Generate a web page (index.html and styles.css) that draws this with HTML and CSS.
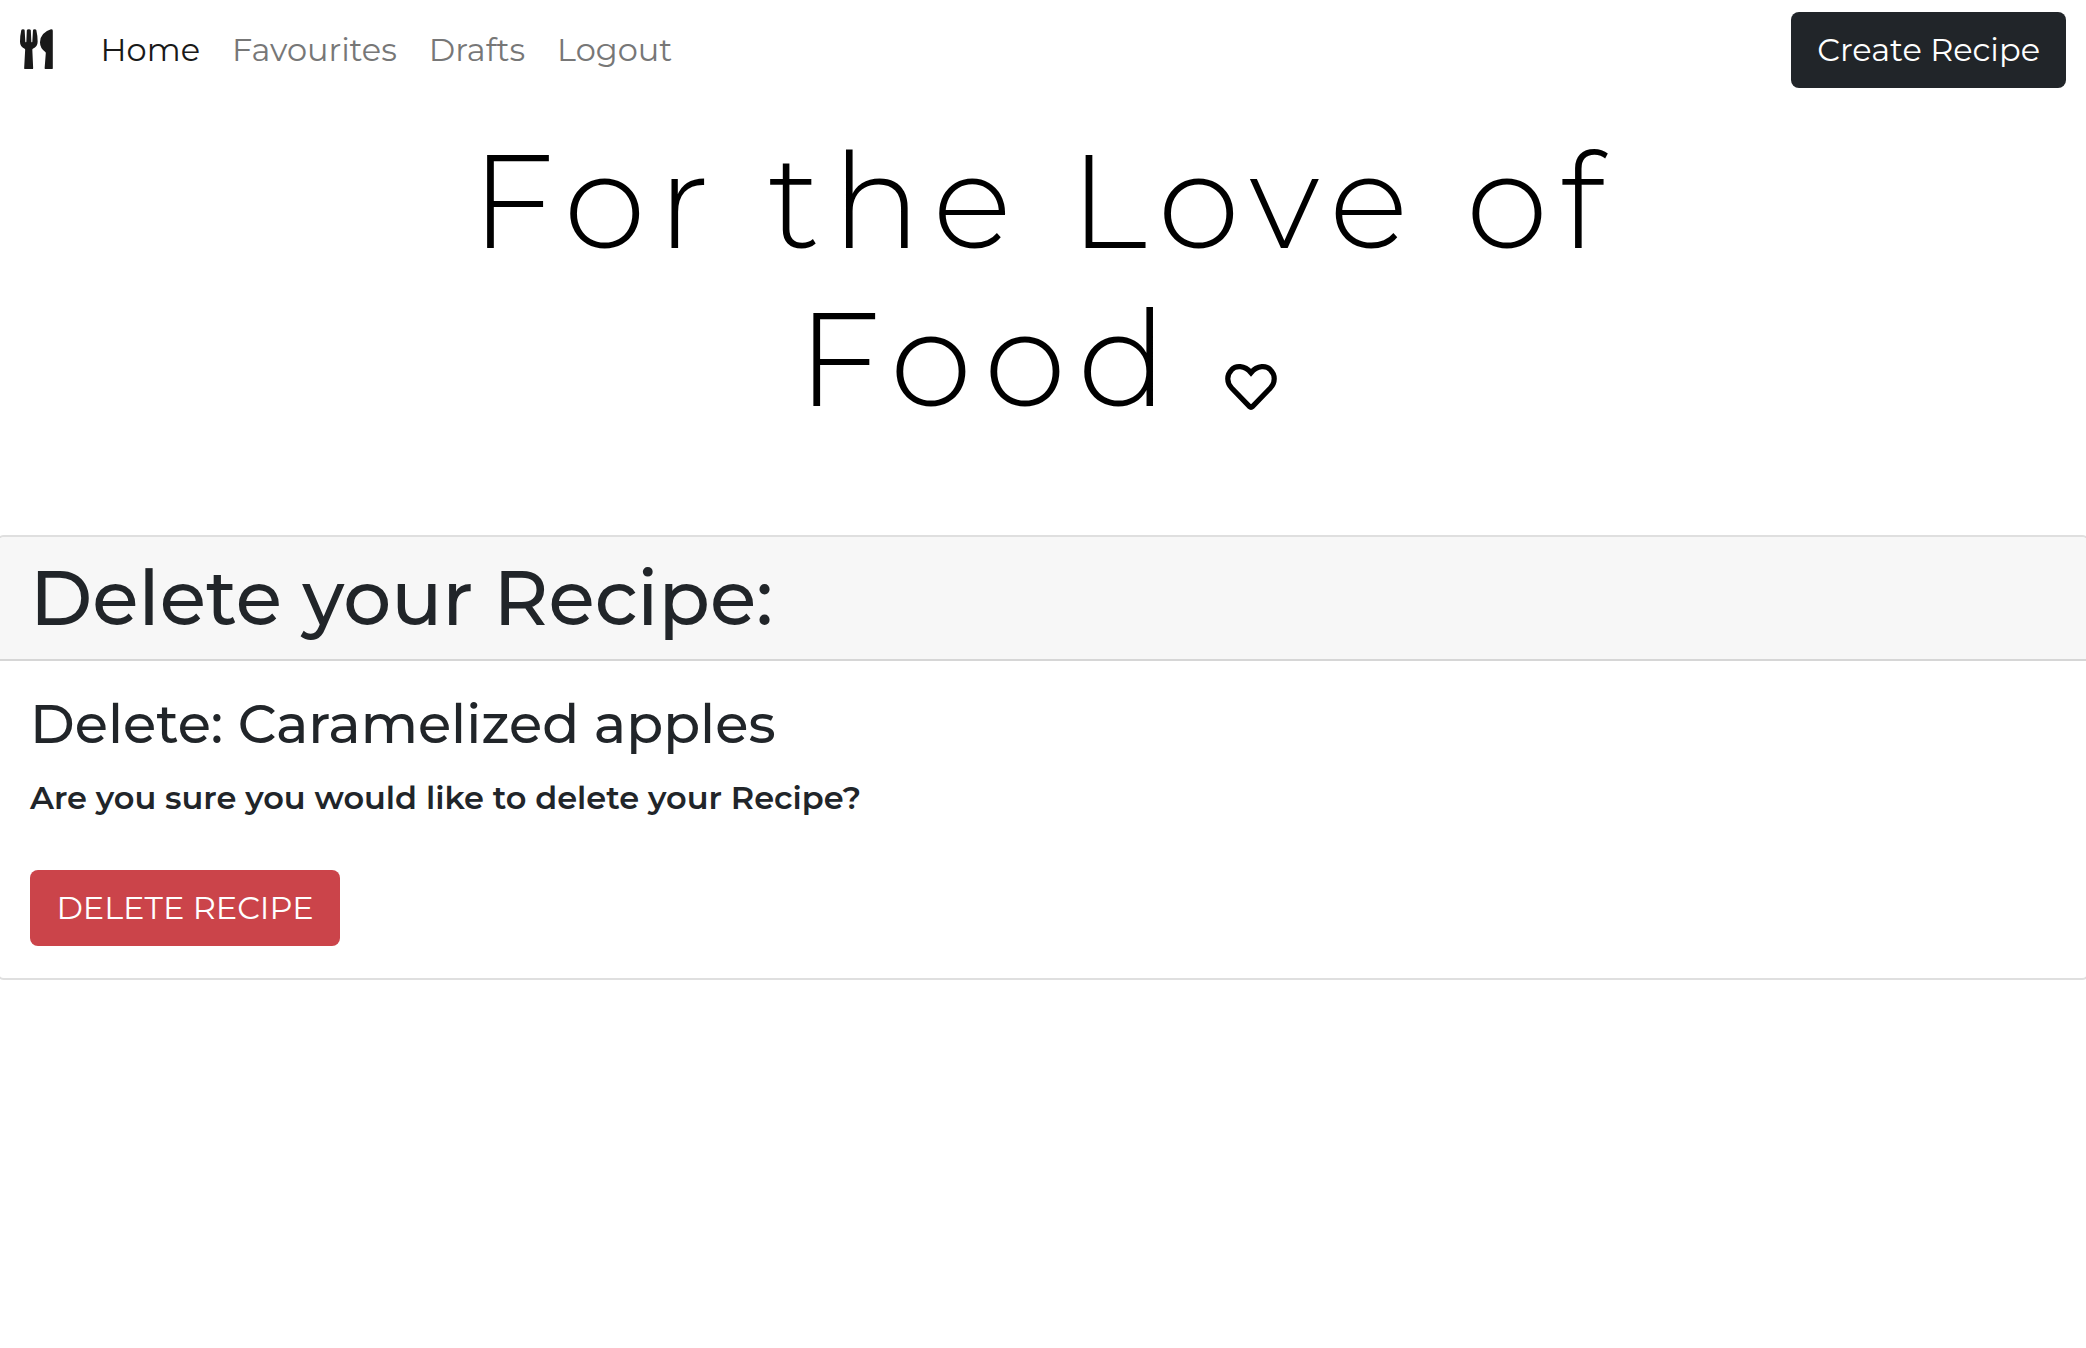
FILE: index.html
```html
<!DOCTYPE html>
<html lang="en">
<head>
<meta charset="utf-8">
<title>For the Love of Food</title>
<link rel="stylesheet" href="styles.css">
</head>
<body>
<nav class="navbar">
  <a class="brand" aria-label="Home">
    <svg class="brand-icon" viewBox="60 56 100 122" fill="currentColor"><path d="M64 59Q65 57 69 57Q74 57 74 60L76 94Q77.500 97 79 94L80.500 60Q81 57 86.500 57Q92 57 92.500 60L94 94Q95.500 97 97 94L99 60Q99 57 104 57Q108 57 109 59Q113 76 113 94Q113 109 98.500 115Q97 116 97 118L99.500 173Q99.500 177.500 95 177.500H77Q72.500 177.500 72.500 173L75.500 118Q75.500 116 74 115Q60 109 60 94Q60 76 64 59ZM153 57Q158.500 56.500 158.500 61V173Q158.500 177.500 154 177.500H139Q134 177.500 134 173L137.500 128Q137.500 126 136 125Q120 114 120 96Q121 67 153 57Z"/></svg>
  </a>
  <div class="links">
    <a class="link active">Home</a>
    <a class="link">Favourites</a>
    <a class="link">Drafts</a>
    <a class="link">Logout</a>
  </div>
  <button class="btn btn-dark">Create Recipe</button>
</nav>
<h1 class="masthead">For the Love of<br>Food <svg class="heart" viewBox="0 0 52 47" fill="none" stroke="currentColor" stroke-width="5.2"><path d="M26 8.7C19.5 1 10.5 1.4 6.6 5.8C1.4 10.8 1.6 18.8 6.6 24L24.6 42.6Q26 44 27.4 42.6L45.4 24C50.4 18.8 50.6 10.8 45.4 5.8C41.5 1.4 32.5 1 26 8.7Z"/></svg></h1>
<section class="card">
  <h2 class="card-header">Delete your Recipe:</h2>
  <div class="card-body">
    <h3 class="subject">Delete: Caramelized apples</h3>
    <p class="question">Are you sure you would like to delete your Recipe?</p>
    <button class="btn btn-danger">DELETE RECIPE</button>
  </div>
</section>
</body>
</html>
```

FILE: styles.css
```css
* { box-sizing: border-box; }
body {
  margin: 0;
  background: #fff;
  color: #212529;
  font: 400 32px/1.5 Montserrat, sans-serif;
  overflow-x: hidden;
}
h1, h2, h3, p { margin: 0; }

.navbar { display: flex; align-items: center; height: 100px; padding: 0 20px; }
.brand { width: 80.6px; height: 43px; color: #191919; }
.brand-icon { display: block; width: 33.3px; height: 40.7px; }
.links { display: flex; flex: 1; gap: 32px; color: #777; }
.active { color: #191919; }

.btn {
  display: block;
  height: 76px;
  padding: 0 26px;
  border: 0;
  border-radius: 8px;
  color: #fff;
  font: inherit;
  white-space: nowrap;
}
.btn-dark { background: #212529; }
.btn-danger { width: 310px; background: #cb444a; }

.masthead {
  padding-top: 22px;
  color: #000;
  font-size: 132px;
  font-weight: 300;
  line-height: 158px;
  letter-spacing: 12px;
  text-align: center;
}
.heart { width: 52px; height: 47px; margin-right: 12px; vertical-align: -5px; }

.card { margin: 97px -4px 0; border: 2px solid #dfdfdf; border-radius: 8px; overflow: hidden; }
.card-header {
  height: 124px;
  padding-left: 32px;
  border-bottom: 2px solid #d6d6d6;
  background: #f7f7f7;
  font-size: 75.5px;
  font-weight: 500;
  line-height: 122px;
}
.card-body { padding: 30px 32px 32px; }
.subject { font-size: 54.2px; font-weight: 500; line-height: 67px; }
.question { margin: 16px 0 48px; font-weight: 600; }
```
